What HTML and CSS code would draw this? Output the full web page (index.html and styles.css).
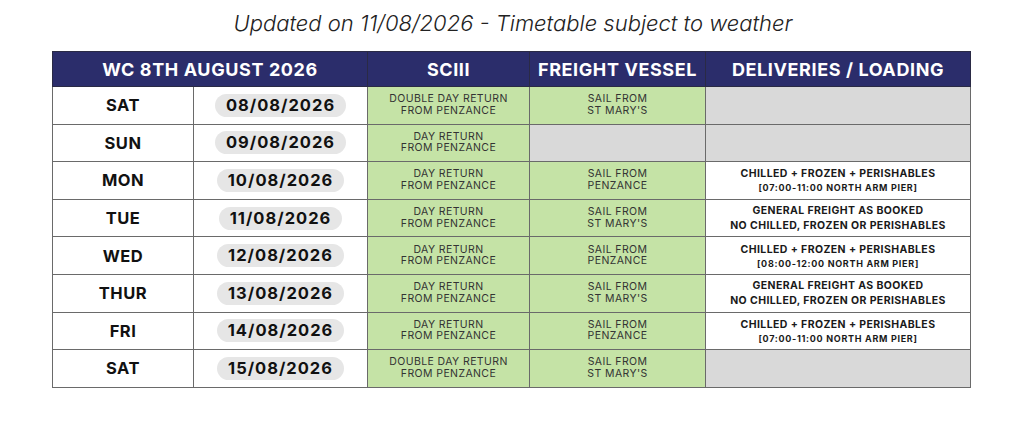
FILE: index.html
```html
<!DOCTYPE html>
<html lang="en">
<head>
<meta charset="utf-8">
<title>Timetable</title>
<link rel="stylesheet" href="styles.css">
</head>
<body>
<div class="page">
  <h1 class="title">Updated on 11/08/2026 - Timetable subject to weather</h1>
  <table class="tt">
    <colgroup>
      <col class="c-day"><col class="c-date"><col class="c-sc"><col class="c-fv"><col class="c-del">
    </colgroup>
    <thead>
      <tr>
        <th colspan="2">WC 8TH AUGUST 2026</th>
        <th>SCIII</th>
        <th>FREIGHT VESSEL</th>
        <th>DELIVERIES / LOADING</th>
      </tr>
    </thead>
    <tbody>
      <tr>
        <td class="day">SAT</td>
        <td class="date"><span class="pill">08/08/2026</span></td>
        <td class="green small"><span>DOUBLE DAY RETURN</span><span>FROM PENZANCE</span></td>
        <td class="green small"><span>SAIL FROM</span><span>ST MARY'S</span></td>
        <td class="grey"></td>
      </tr>
      <tr>
        <td class="day">SUN</td>
        <td class="date"><span class="pill">09/08/2026</span></td>
        <td class="green small"><span>DAY RETURN</span><span>FROM PENZANCE</span></td>
        <td class="grey"></td>
        <td class="grey"></td>
      </tr>
      <tr>
        <td class="day">MON</td>
        <td class="date"><span class="pill">10/08/2026</span></td>
        <td class="green small"><span>DAY RETURN</span><span>FROM PENZANCE</span></td>
        <td class="green small"><span>SAIL FROM</span><span>PENZANCE</span></td>
        <td class="del"><span class="main">CHILLED + FROZEN + PERISHABLES</span><span class="sub">[07:00-11:00 NORTH ARM PIER]</span></td>
      </tr>
      <tr>
        <td class="day">TUE</td>
        <td class="date"><span class="pill">11/08/2026</span></td>
        <td class="green small"><span>DAY RETURN</span><span>FROM PENZANCE</span></td>
        <td class="green small"><span>SAIL FROM</span><span>ST MARY'S</span></td>
        <td class="del"><span class="main">GENERAL FREIGHT AS BOOKED</span><span class="main">NO CHILLED, FROZEN OR PERISHABLES</span></td>
      </tr>
      <tr>
        <td class="day">WED</td>
        <td class="date"><span class="pill">12/08/2026</span></td>
        <td class="green small"><span>DAY RETURN</span><span>FROM PENZANCE</span></td>
        <td class="green small"><span>SAIL FROM</span><span>PENZANCE</span></td>
        <td class="del"><span class="main">CHILLED + FROZEN + PERISHABLES</span><span class="sub">[08:00-12:00 NORTH ARM PIER]</span></td>
      </tr>
      <tr>
        <td class="day">THUR</td>
        <td class="date"><span class="pill">13/08/2026</span></td>
        <td class="green small"><span>DAY RETURN</span><span>FROM PENZANCE</span></td>
        <td class="green small"><span>SAIL FROM</span><span>ST MARY'S</span></td>
        <td class="del"><span class="main">GENERAL FREIGHT AS BOOKED</span><span class="main">NO CHILLED, FROZEN OR PERISHABLES</span></td>
      </tr>
      <tr>
        <td class="day">FRI</td>
        <td class="date"><span class="pill">14/08/2026</span></td>
        <td class="green small"><span>DAY RETURN</span><span>FROM PENZANCE</span></td>
        <td class="green small"><span>SAIL FROM</span><span>PENZANCE</span></td>
        <td class="del"><span class="main">CHILLED + FROZEN + PERISHABLES</span><span class="sub">[07:00-11:00 NORTH ARM PIER]</span></td>
      </tr>
      <tr>
        <td class="day">SAT</td>
        <td class="date"><span class="pill">15/08/2026</span></td>
        <td class="green small"><span>DOUBLE DAY RETURN</span><span>FROM PENZANCE</span></td>
        <td class="green small"><span>SAIL FROM</span><span>ST MARY'S</span></td>
        <td class="grey"></td>
      </tr>
    </tbody>
  </table>
</div>
</body>
</html>
```

FILE: styles.css
```css
* { box-sizing: border-box; }
html, body { margin: 0; padding: 0; background: #ffffff; }
body { font-family: Inter, "Open Sans", "Liberation Sans", sans-serif; color: #111; }

.page { padding: 10px 54px 0 52px; }

.title {
  margin: 0 0 14px;
  font-size: 22px;
  line-height: 27px;
  font-weight: 300;
  font-style: italic;
  color: #222;
  text-align: center;
  padding-left: 4px;
}

.tt {
  width: 918px;
  border-collapse: collapse;
  table-layout: fixed;
  border: 1px solid #6a6a6a;
}
.c-day { width: 141px; }
.c-date { width: 174px; }
.c-sc { width: 162px; }
.c-fv { width: 176px; }
.c-del { width: 265px; }

.tt th {
  background: #2b2d6b;
  color: #ffffff;
  height: 35px;
  font-size: 18px;
  font-weight: 700;
  letter-spacing: 0.6px;
  text-align: center;
  vertical-align: middle;
  border: 1px solid #2a2a45;
  padding: 0;
}

.tt td {
  height: 37.6px;
  border: 1px solid #6a6a6a;
  padding: 0;
  text-align: center;
  vertical-align: middle;
}

.day {
  font-size: 16.5px;
  font-weight: 700;
  letter-spacing: 0.5px;
  color: #111;
}

.pill {
  display: inline-block;
  background: #e6e6e6;
  border-radius: 12px;
  height: 23px;
  line-height: 23px;
  padding: 0 11px;
  font-size: 16.5px;
  font-weight: 700;
  letter-spacing: 1px;
  color: #111;
}

.green { background: #c5e3a6; }
.grey { background: #d9d9d9; }

.small {
  font-size: 10.5px;
  letter-spacing: 0.4px;
  color: #333;
}
.small span {
  display: block;
  line-height: 12.5px;
  margin-top: -1px;
}
.small span:first-child { margin-top: 0; }

.del .main,
.del .sub {
  display: block;
  font-weight: 700;
  color: #1a1a1a;
}
.del .main {
  font-size: 10.5px;
  line-height: 15px;
  letter-spacing: 0.4px;
}
.del .sub {
  font-size: 9px;
  line-height: 13px;
  letter-spacing: 0.7px;
}
```
